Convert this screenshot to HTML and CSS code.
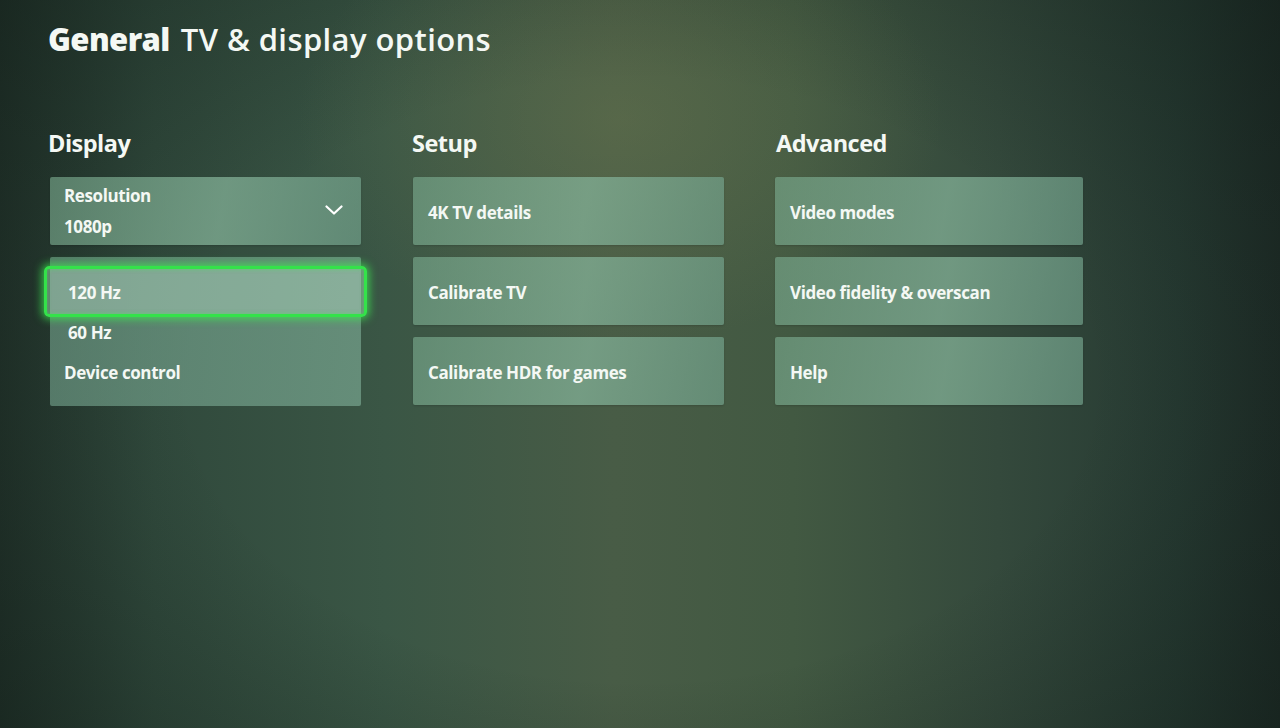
FILE: index.html
```html
<!DOCTYPE html>
<html lang="en">
<head>
<meta charset="utf-8">
<title>TV &amp; display options</title>
<link rel="stylesheet" href="styles.css">
</head>
<body>
<div class="screen">
  <h1 class="title"><span class="title-strong">General</span> <span class="title-light">TV &amp; display options</span></h1>
  <div class="columns">
    <section class="col col-display">
      <h2 class="col-head">Display</h2>
      <div class="tile tile-select">
        <div class="select-text">
          <div class="select-label">Resolution</div>
          <div class="select-value">1080p</div>
        </div>
        <svg class="chevron" width="18" height="10" viewBox="0 0 18 10"><path d="M1.5 1.5 L9 8.5 L16.5 1.5" fill="none" stroke="#fff" stroke-width="2.2" stroke-linecap="round" stroke-linejoin="round"/></svg>
      </div>
      <div class="dropdown">
        <div class="option option-focus">120 Hz</div>
        <div class="option">60 Hz</div>
        <div class="option option-plain">Device control</div>
      </div>
    </section>
    <section class="col col-setup">
      <h2 class="col-head">Setup</h2>
      <div class="tile">4K TV details</div>
      <div class="tile">Calibrate TV</div>
      <div class="tile">Calibrate HDR for games</div>
    </section>
    <section class="col col-advanced">
      <h2 class="col-head">Advanced</h2>
      <div class="tile">Video modes</div>
      <div class="tile">Video fidelity &amp; overscan</div>
      <div class="tile">Help</div>
    </section>
  </div>
</div>
</body>
</html>
```
FILE: styles.css
```css
html, body {
  margin: 0;
  padding: 0;
  width: 1280px;
  height: 728px;
  overflow: hidden;
}
body {
  font-family: "Open Sans", "Noto Sans", sans-serif;
  color: #f4f8f4;
  background:
    radial-gradient(ellipse 460px 320px at 620px 120px, rgba(115, 125, 80, 0.35), rgba(115, 125, 80, 0) 70%),
    radial-gradient(ellipse 900px 600px at 640px 380px, rgba(0, 0, 0, 0) 50%, rgba(10, 20, 15, 0.4) 100%),
    linear-gradient(90deg, #22332b 0%, #30493c 12%, #3a5645 30%, #485c46 48%, #425942 62%, #34493c 78%, #263a32 92%, #1f2d28 100%);
}
.screen {
  padding: 16px 0 0 48px;
}
.title {
  margin: 0;
  font-size: 31px;
  line-height: 46px;
  font-weight: 600;
  white-space: nowrap;
}
.title-strong {
  font-weight: 800;
  letter-spacing: -0.6px;
}
.title-light {
  margin-left: 3px;
  font-weight: 600;
  letter-spacing: 0.4px;
}
.columns {
  display: grid;
  grid-template-columns: 311px 311px 307px;
  column-gap: 52px;
  margin-top: 65px;
  padding-left: 2px;
}
.col {
  display: flex;
  flex-direction: column;
  gap: 12px;
}
.col-advanced {
  margin-left: -1px;
}
.col-head {
  margin: 0 0 6px -2px;
  font-size: 23.5px;
  line-height: 32px;
  font-weight: 700;
  letter-spacing: -0.5px;
}
.col-setup .col-head {
  margin-left: -1px;
}
.col-advanced .col-head {
  margin-left: 1px;
}
.tile {
  height: 68px;
  box-sizing: border-box;
  padding: 3px 15px 0 15px;
  display: flex;
  align-items: center;
  font-size: 17px;
  font-weight: 700;
  letter-spacing: -0.4px;
  background: linear-gradient(100deg, rgba(120, 168, 140, 0.64), rgba(132, 178, 152, 0.74) 55%, rgba(115, 162, 140, 0.68));
  border-radius: 2px;
  box-shadow: 0 1px 2px rgba(0, 0, 0, 0.15);
}
.tile-select {
  justify-content: space-between;
  padding: 1px 18px 0 14px;
}
.select-text {
  display: flex;
  flex-direction: column;
  gap: 9px;
}
.select-label, .select-value {
  line-height: 22px;
}
.chevron {
  margin-top: -4px;
}
.dropdown {
  height: 149px;
  box-sizing: border-box;
  padding: 16px 0 0 0;
  display: flex;
  flex-direction: column;
  background: linear-gradient(100deg, rgba(115, 162, 140, 0.62), rgba(122, 168, 146, 0.68));
  border-radius: 2px;
  font-size: 17px;
  font-weight: 700;
  letter-spacing: -0.4px;
}
.option {
  height: 40px;
  line-height: 40px;
  padding-left: 18px;
  position: relative;
}
.option-plain {
  padding-left: 14px;
}
.option-focus {
  z-index: 1;
  isolation: isolate;
}
.option-focus::before {
  content: "";
  position: absolute;
  top: -7px;
  bottom: -4px;
  left: -6px;
  right: -6px;
  border: 3px solid #34e24a;
  border-radius: 5px;
  background: rgba(180, 215, 195, 0.45);
  box-shadow: 0 0 8px 2px rgba(60, 240, 80, 0.75), inset 0 0 4px rgba(60, 240, 80, 0.5);
  z-index: -1;
}
```
